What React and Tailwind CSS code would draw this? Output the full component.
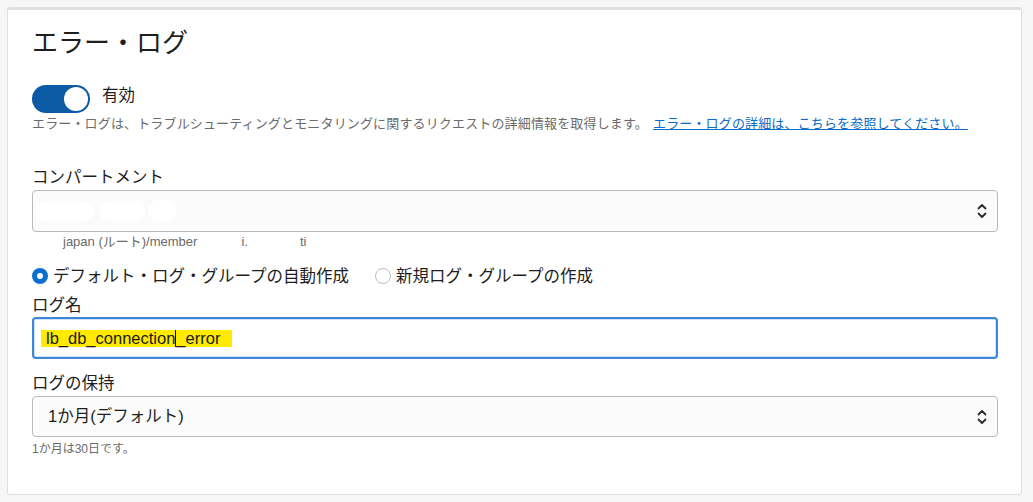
import React from "react";

const font = { fontFamily: '"Liberation Sans", "Noto Sans CJK JP", sans-serif' };

function Chevrons() {
  return (
    <svg width="12" height="18" viewBox="0 0 12 18" fill="none" stroke="#2b2b2b" strokeWidth="1.8" strokeLinecap="round" strokeLinejoin="round">
      <path d="M2.5 6.5 L6 3 L9.5 6.5" />
      <path d="M2.5 11.5 L6 15 L9.5 11.5" />
    </svg>
  );
}

function Toggle() {
  return (
    <div className="flex h-[28px] w-[58px] items-center justify-end rounded-full bg-[#0b5aa4] pr-[2px]">
      <div className="h-[24px] w-[24px] rounded-full bg-white" />
    </div>
  );
}

function Radio({ checked, label }) {
  return (
    <label className="flex items-center gap-[5px]">
      {checked ? (
        <span className="flex h-[16px] w-[16px] items-center justify-center rounded-full bg-[#0b6fd0]">
          <span className="h-[6px] w-[6px] rounded-full bg-white" />
        </span>
      ) : (
        <span className="h-[16px] w-[16px] rounded-full border border-[#b9bcc2] bg-white" />
      )}
      <span className="text-[16.5px] leading-[22px] text-[#1e1e1e]">{label}</span>
    </label>
  );
}

function SelectBox({ children, h = "h-[42px]" }) {
  return (
    <div className={`flex ${h} items-center justify-between rounded-[4px] border border-[#b6bac1] bg-[#fbfbfb] pl-[15px] pr-[9px]`}>
      <div className="flex items-center">{children}</div>
      <Chevrons />
    </div>
  );
}

export default function App() {
  return (
    <div className="min-h-screen bg-[#f6f6f6] pl-[7px] pr-[11px] pt-[7px] pb-[8px]" style={font}>
      <div className="rounded-[3px] border border-t-[3px] border-[#e0e0e4] border-t-[#e0e0e4] bg-white pb-[37px] pl-[24px] pr-[23px] pt-[18px]">
        <h2 className="text-[26px] leading-[30px] text-[#1f1f1f]">エラー・ログ</h2>

        <div className="mt-[27px] flex items-start gap-[12px]">
          <Toggle />
          <span className="text-[16.5px] leading-[20px] text-[#1e1e1e]">有効</span>
        </div>
        <p className="mt-[2px] text-[13px] leading-[18px] tracking-[0.15px] text-[#6b6b6b]">
          エラー・ログは、トラブルシューティングとモニタリングに関するリクエストの詳細情報を取得します。
          <a href="#" className="ml-[5px] text-[#0a6cc4] underline">
            エラー・ログの詳細は、こちらを参照してください。
          </a>
        </p>

        <div className="mt-[33px] text-[16.5px] leading-[22px] text-[#1e1e1e]">コンパートメント</div>
        <div className="mt-[2px]">
          <SelectBox>
            <span className="-ml-[14px] h-[20px] w-[60px] rounded-full bg-white" />
            <span className="ml-[5px] h-[20px] w-[46px] rounded-full bg-white" />
            <span className="ml-[3px] h-[22px] w-[28px] rounded-full bg-white" />
          </SelectBox>
        </div>
        <div className="mt-[2px] flex pl-[31px] text-[13px] leading-[16px] text-[#6b6b6b]">
          <span>japan (ルート)/member</span>
          <span className="ml-[44px]">i.</span>
          <span className="ml-[52px]">ti</span>
        </div>

        <div className="mt-[15px] flex items-center gap-[26px]">
          <Radio checked label="デフォルト・ログ・グループの自動作成" />
          <Radio label="新規ログ・グループの作成" />
        </div>

        <div className="mt-[7px] text-[16.5px] leading-[22px] text-[#1e1e1e]">ログ名</div>
        <div className="mt-[1px] flex h-[42px] items-center rounded-[4px] border-2 border-[#3d86d8] bg-white pl-[7px] shadow-[inset_0_0_0_1px_#cfe1f5]">
          <span className="relative bg-[#ffea00] pl-[5px] pr-[12px] text-[16.5px] leading-[17px] text-[#1b1b1b]">
            lb_db_connection
            <span className="inline-block h-[17px] w-[1px] bg-black align-top" />
            _error
          </span>
        </div>

        <div className="mt-[13px] text-[16.5px] leading-[22px] text-[#1e1e1e]">ログの保持</div>
        <div className="mt-[2px]">
          <SelectBox h="h-[41px]">
            <span className="text-[16.5px] text-[#1e1e1e]">1か月(デフォルト)</span>
          </SelectBox>
        </div>
        <div className="mt-[4px] text-[12px] leading-[16px] text-[#6b6b6b]">1か月は30日です。</div>
      </div>
    </div>
  );
}
